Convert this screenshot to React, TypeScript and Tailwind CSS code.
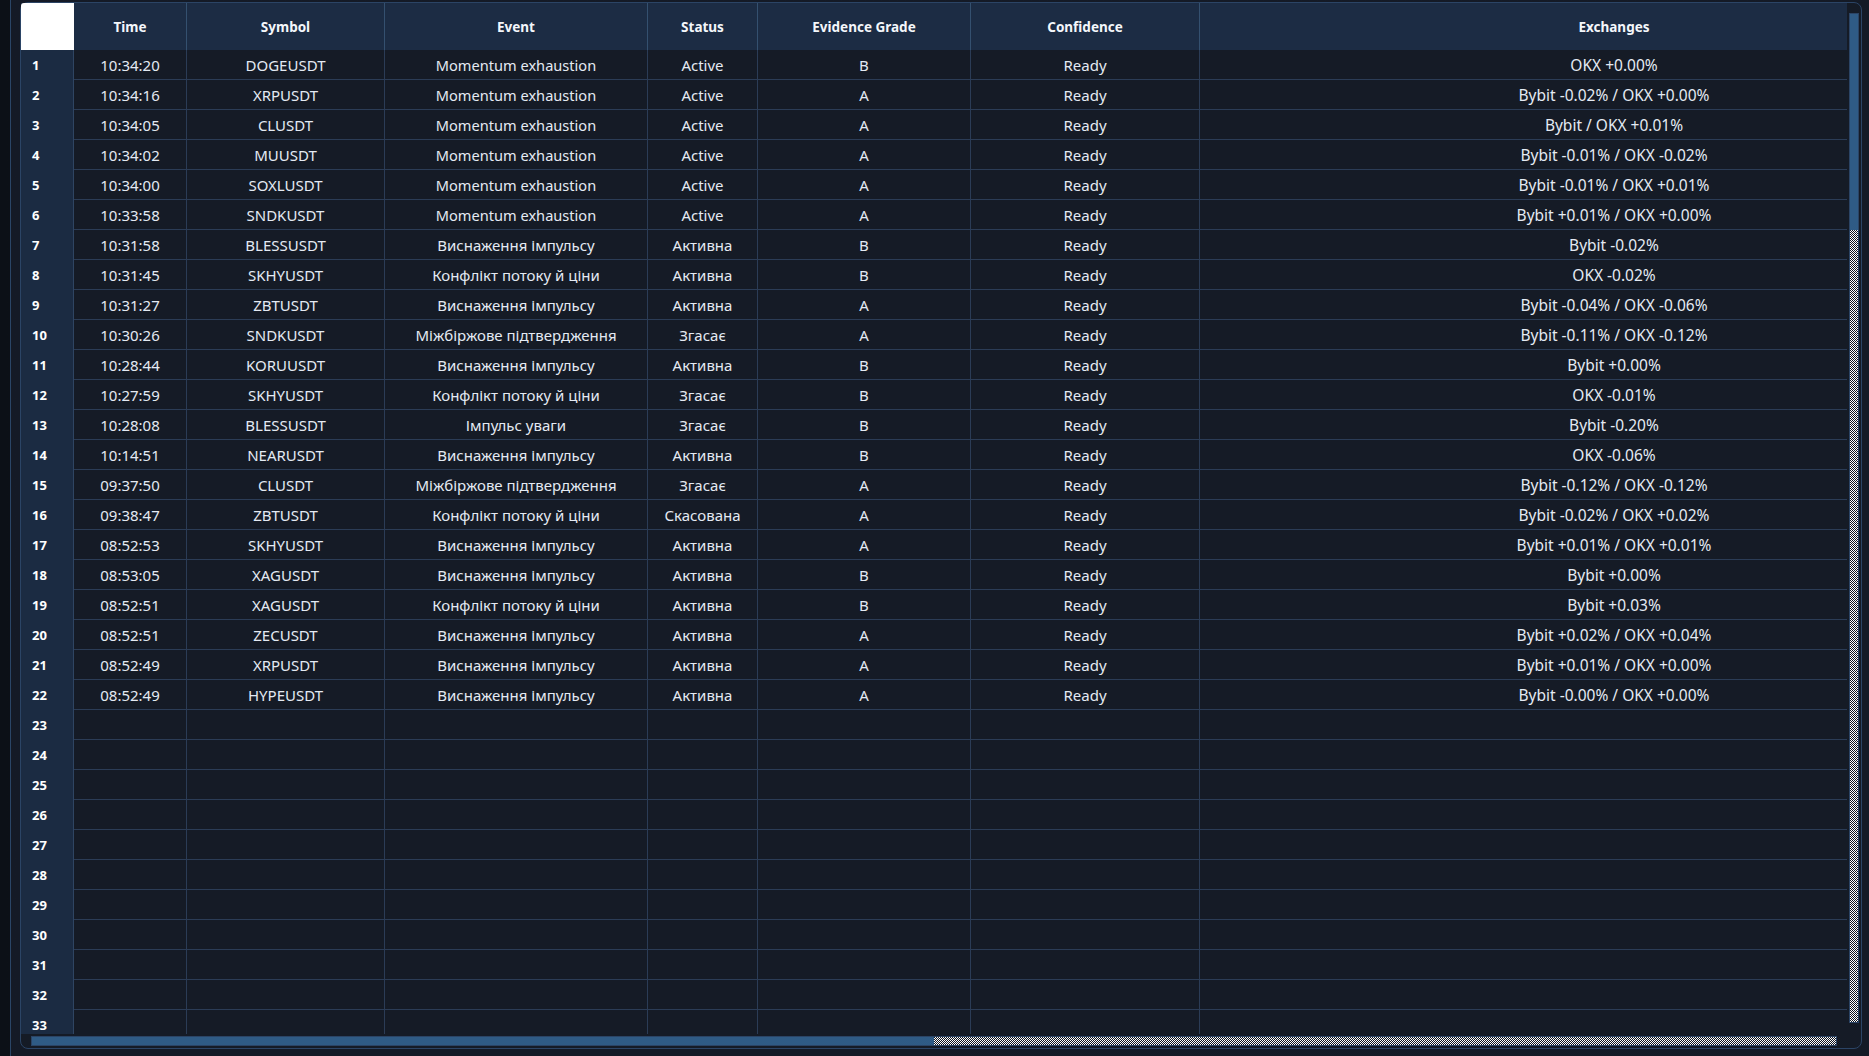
const M = "Momentum exhaustion";
const V = "Виснаження імпульсу";
const K = "Конфлікт потоку й ціни";
const X = "Міжбіржове підтвердження";
const I = "Імпульс уваги";
const AK = "Активна";
const Z = "Згасає";
const R = "Ready";

const data: string[][] = [
  ["10:34:20", "DOGEUSDT", M, "Active", "B", R, "OKX +0.00%"],
  ["10:34:16", "XRPUSDT", M, "Active", "A", R, "Bybit -0.02% / OKX +0.00%"],
  ["10:34:05", "CLUSDT", M, "Active", "A", R, "Bybit / OKX +0.01%"],
  ["10:34:02", "MUUSDT", M, "Active", "A", R, "Bybit -0.01% / OKX -0.02%"],
  ["10:34:00", "SOXLUSDT", M, "Active", "A", R, "Bybit -0.01% / OKX +0.01%"],
  ["10:33:58", "SNDKUSDT", M, "Active", "A", R, "Bybit +0.01% / OKX +0.00%"],
  ["10:31:58", "BLESSUSDT", V, AK, "B", R, "Bybit -0.02%"],
  ["10:31:45", "SKHYUSDT", K, AK, "B", R, "OKX -0.02%"],
  ["10:31:27", "ZBTUSDT", V, AK, "A", R, "Bybit -0.04% / OKX -0.06%"],
  ["10:30:26", "SNDKUSDT", X, Z, "A", R, "Bybit -0.11% / OKX -0.12%"],
  ["10:28:44", "KORUUSDT", V, AK, "B", R, "Bybit +0.00%"],
  ["10:27:59", "SKHYUSDT", K, Z, "B", R, "OKX -0.01%"],
  ["10:28:08", "BLESSUSDT", I, Z, "B", R, "Bybit -0.20%"],
  ["10:14:51", "NEARUSDT", V, AK, "B", R, "OKX -0.06%"],
  ["09:37:50", "CLUSDT", X, Z, "A", R, "Bybit -0.12% / OKX -0.12%"],
  ["09:38:47", "ZBTUSDT", K, "Скасована", "A", R, "Bybit -0.02% / OKX +0.02%"],
  ["08:52:53", "SKHYUSDT", V, AK, "A", R, "Bybit +0.01% / OKX +0.01%"],
  ["08:53:05", "XAGUSDT", V, AK, "B", R, "Bybit +0.00%"],
  ["08:52:51", "XAGUSDT", K, AK, "B", R, "Bybit +0.03%"],
  ["08:52:51", "ZECUSDT", V, AK, "A", R, "Bybit +0.02% / OKX +0.04%"],
  ["08:52:49", "XRPUSDT", V, AK, "A", R, "Bybit +0.01% / OKX +0.00%"],
  ["08:52:49", "HYPEUSDT", V, AK, "A", R, "Bybit -0.00% / OKX +0.00%"],
];

const cols = "grid grid-cols-[53px_113px_198px_263px_110px_213px_229px_828px]";
const headers = ["Time", "Symbol", "Event", "Status", "Evidence Grade", "Confidence", "Exchanges"];
const checker =
  "[background:repeating-conic-gradient(#ffffff_0_25%,#10151f_0_50%)_0_0/2px_2px]";

function Row({ n, cells }: { n: number; cells: string[] }) {
  return (
    <div className={`${cols} h-[30px] shrink-0`}>
      <div className="bg-[#1b2b42] border-r border-[#2f4562] pl-[11px] pt-px flex items-center text-[13px] font-bold text-white">
        {n}
      </div>
      {cells.map((c, i) => (
        <div
          key={i}
          className={`flex items-center justify-center pt-[2px] border-b border-[#2b3c56] whitespace-nowrap ${
            i < 6 ? "border-r" : "text-[15.5px]"
          } ${c === M ? "text-[14.6px]" : ""}`}
        >
          {c}
        </div>
      ))}
    </div>
  );
}

export default function App() {
  const rows = Array.from({ length: 33 }, (_, i) => data[i] ?? ["", "", "", "", "", "", ""]);
  return (
    <div className="w-full h-[1056px] overflow-hidden bg-[#141a26] bg-gradient-to-r from-[#0c1017] from-[10px] to-[#141a26] to-[10px] font-['Noto_Sans',sans-serif]">
      <div className="ml-[10px] h-full border-l border-[#2a4566] pl-[9px] pr-[7px] pt-[2px]">
        <div className="flex flex-col h-[1047px] border border-[#2b4465] rounded-[8px] bg-[#151b26]">
          <div className="flex flex-1 min-h-0">
            <div className="w-[1826px] flex flex-col overflow-hidden text-[15px] text-[#e4eaf3]">
              <div className={`${cols} h-[47px] shrink-0 bg-[#1c2c44] text-[13.5px] font-bold text-[#f4f7fb]`}>
                <div className="bg-white rounded-tl-[3px]" />
                {headers.map((h, i) => (
                  <div
                    key={h}
                    className={`flex items-center justify-center pt-px border-[#34506f] ${i < 6 ? "border-r" : ""}`}
                  >
                    {h}
                  </div>
                ))}
              </div>
              {rows.map((r, i) => (
                <Row key={i} n={i + 1} cells={r} />
              ))}
            </div>
            <div className="w-[14px] shrink-0 pl-[2px] pt-[10px]">
              <div className="h-[1010px] w-[10px] flex flex-col border border-[#2b4465]">
                <div className="h-[216px] bg-[#2f5b85]" />
                <div className={`flex-1 ${checker}`} />
              </div>
            </div>
          </div>
          <div className="h-[14px] shrink-0 pl-[10px] pt-[2px]">
            <div className="w-[1806px] h-[10px] flex border border-[#2b4465]">
              <div className="w-[902px] bg-[#2f5b85]" />
              <div className={`flex-1 ${checker}`} />
            </div>
          </div>
        </div>
      </div>
    </div>
  );
}
